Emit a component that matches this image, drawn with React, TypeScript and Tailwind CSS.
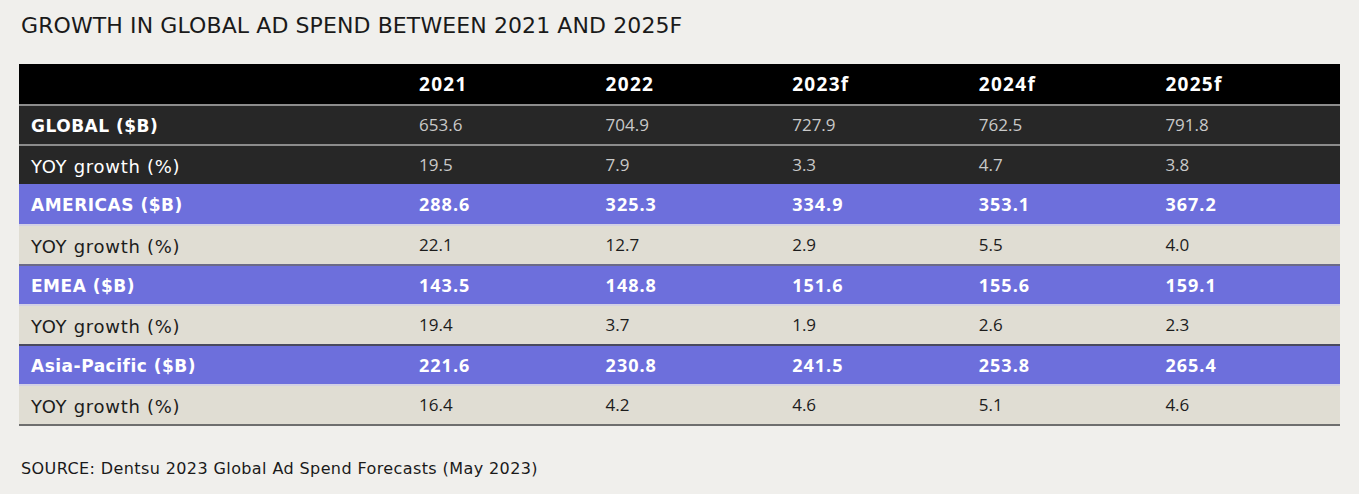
import React from 'react';

type Row = {
  label: string;
  values: string[];
  kind: 'dark' | 'purple' | 'beige';
  border?: string;
};

const years = ['2021', '2022', '2023f', '2024f', '2025f'];

const rows: Row[] = [
  { label: 'GLOBAL ($B)', values: ['653.6', '704.9', '727.9', '762.5', '791.8'], kind: 'dark', border: 'border-t-2 border-[#8c8c8c]' },
  { label: 'YOY growth (%)', values: ['19.5', '7.9', '3.3', '4.7', '3.8'], kind: 'dark', border: 'border-t-2 border-[#8c8c8c]' },
  { label: 'AMERICAS ($B)', values: ['288.6', '325.3', '334.9', '353.1', '367.2'], kind: 'purple' },
  { label: 'YOY growth (%)', values: ['22.1', '12.7', '2.9', '5.5', '4.0'], kind: 'beige', border: 'border-t-2 border-[#d2d0e4]' },
  { label: 'EMEA ($B)', values: ['143.5', '148.8', '151.6', '155.6', '159.1'], kind: 'purple', border: 'border-t-2 border-[#6b6a86]' },
  { label: 'YOY growth (%)', values: ['19.4', '3.7', '1.9', '2.6', '2.3'], kind: 'beige', border: 'border-t-2 border-[#d2d0e4]' },
  { label: 'Asia-Pacific ($B)', values: ['221.6', '230.8', '241.5', '253.8', '265.4'], kind: 'purple', border: 'border-t-2 border-[#4a4a5e]' },
  { label: 'YOY growth (%)', values: ['16.4', '4.2', '4.6', '5.1', '4.6'], kind: 'beige', border: 'border-t-2 border-[#d2d0e4]' },
];

const rowStyles = {
  dark: { bg: 'bg-[#272727]', label: 'text-white', value: 'text-[#c9c9c9] font-normal text-[17px]' },
  purple: { bg: 'bg-[#6d6fdc]', label: 'text-white', value: 'text-white font-bold text-[18px] tracking-[1px]' },
  beige: { bg: 'bg-[#e0ddd3]', label: 'text-[#1c1c1c]', value: 'text-[#1c1c1c] font-normal text-[17px]' },
};

const wide = { fontFamily: '"DejaVu Sans", "Open Sans", sans-serif' };

export default function App() {
  return (
    <div className="w-[1368px] h-[501px] bg-white" style={{ fontFamily: '"Open Sans", "Liberation Sans", sans-serif' }}>
      <div className="w-[1359px] h-[494px] bg-[#f0efec] pt-[13px] pl-[19px]">
        <h1 className="text-[22px] leading-[26px] text-[#1a1a1a] pl-[2px] tracking-[0.1px]" style={wide}>
          GROWTH IN GLOBAL AD SPEND BETWEEN 2021 AND 2025F
        </h1>

        <div className="mt-[25px] w-[1321px] border-b-2 border-[#6e6e6e]">
          {/* header */}
          <div className="flex h-[40px] items-center bg-black text-white font-bold text-[19px] tracking-[1.3px]">
            <div className="w-[388px]" />
            {years.map(y => (
              <div key={y} className="w-[186.6px] pl-[12px]">{y}</div>
            ))}
          </div>

          {rows.map((r, i) => {
            const s = rowStyles[r.kind];
            const labelBold = r.label.includes('$B');
            return (
              <div
                key={i}
                className={`flex h-[40px] items-center ${s.bg} ${r.border ?? ''}`}
              >
                <div
                  className={`w-[388px] pl-[12px] pt-[3px] ${
                    labelBold ? 'font-bold text-white text-[17px] tracking-[0.5px]' : `${s.label} text-[18px] tracking-[0.7px]`
                  }`}
                  style={wide}
                >
                  {r.label}
                </div>
                {r.values.map((v, j) => (
                  <div key={j} className={`w-[186.6px] pl-[12px] ${s.value}`}>{v}</div>
                ))}
              </div>
            );
          })}
        </div>

        <p className="mt-[31px] pl-[2px] text-[16px] tracking-[0.4px] text-[#1a1a1a]" style={wide}>
          SOURCE: Dentsu 2023 Global Ad Spend Forecasts (May 2023)
        </p>
      </div>
    </div>
  );
}
